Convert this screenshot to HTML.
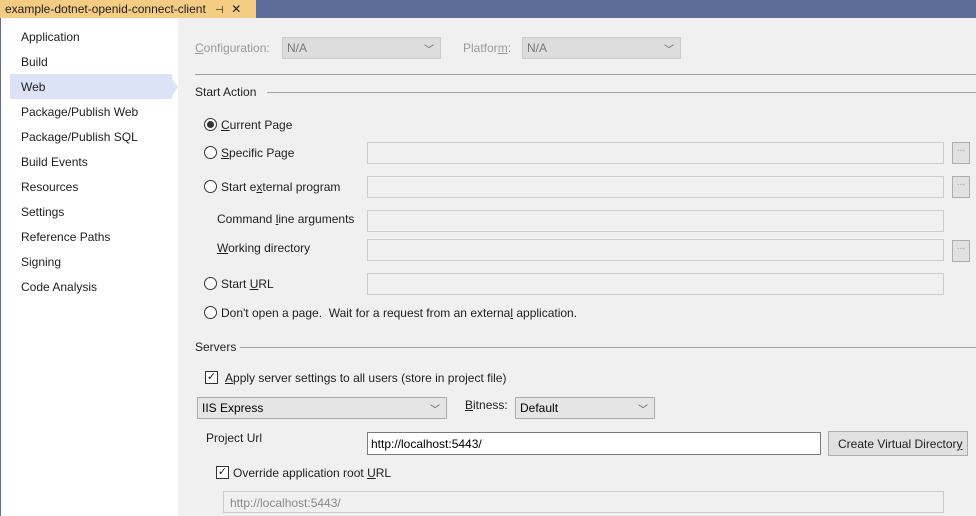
<!DOCTYPE html>
<html><head><style>
*{box-sizing:border-box}
body{margin:0;width:976px;height:516px;overflow:hidden;font-family:"Liberation Sans",sans-serif;font-size:12px;color:#1e1e1e;position:relative;background:#f0f0f0}
.a{position:absolute;white-space:nowrap}
.tb{left:0;top:0;width:976px;height:18px;background:#5d6b99}
.tab{left:0;top:0;width:256px;height:18px;background:#f5cc84;padding:2px 0 0 5px;font-size:12px}
.side{left:0;top:18px;width:178px;height:498px;background:#fff;border-left:1px solid #5d6b99}
.si{left:21px}
.sel{left:10px;top:74px;width:162px;height:25px;background:#dde3f7}
.box{background:#f0f0f0;border:1px solid #ccc;height:22px}
.dd{background:#ddd;border:1px solid #ccc;height:22px;padding:3px 4px;color:#777}
.dd2{background:#e5e5e5;border:1px solid #adadad;height:22px;padding:3px 4px;color:#000}
.rad{width:13px;height:13px;border:1px solid #333;border-radius:50%;background:#fff}
.cb{width:13px;height:13px;border:1px solid #333;background:#fff;font-size:11px;line-height:11px;text-align:center}
.hr{height:1px;background:#a0a0a0}
.btn{background:#e1e1e1;border:1px solid #adadad;width:18px;height:22px;color:#999;text-align:center;font-size:10px}
.chev{position:absolute;right:6px;top:3px;font-size:10px;color:#555}
u{text-decoration:underline}
</style></head><body>
<div class="a tb"></div>
<div class="a tab">example-dotnet-openid-connect-client <span style="margin-left:6px;font-size:10px">⊣</span> <span style="margin-left:4px">✕</span></div>
<div class="a side"></div>
<div class="a sel"></div>
<div class="a" style="left:172px;top:78px;width:0;height:0;border-top:9px solid transparent;border-bottom:9px solid transparent;border-left:6px solid #dde3f7"></div>
<div class="a si" style="top:30px">Application</div>
<div class="a si" style="top:55px">Build</div>
<div class="a si" style="top:80px">Web</div>
<div class="a si" style="top:105px">Package/Publish Web</div>
<div class="a si" style="top:130px">Package/Publish SQL</div>
<div class="a si" style="top:155px">Build Events</div>
<div class="a si" style="top:180px">Resources</div>
<div class="a si" style="top:205px">Settings</div>
<div class="a si" style="top:230px">Reference Paths</div>
<div class="a si" style="top:255px">Signing</div>
<div class="a si" style="top:280px">Code Analysis</div>

<div class="a" style="left:195px;top:41px;color:#999"><u>C</u>onfiguration:</div>
<div class="a dd" style="left:282px;top:37px;width:159px">N/A<span class="chev">﹀</span></div>
<div class="a" style="left:463px;top:41px;color:#999">Platfor<u>m</u>:</div>
<div class="a dd" style="left:522px;top:37px;width:159px">N/A<span class="chev">﹀</span></div>
<div class="a hr" style="left:195px;top:74px;width:781px"></div>
<div class="a" style="left:195px;top:85px">Start Action</div>
<div class="a hr" style="left:267px;top:92px;width:709px"></div>

<div class="a rad" style="left:204px;top:118px"><div style="margin:2px;width:7px;height:7px;border-radius:50%;background:#333"></div></div>
<div class="a" style="left:221px;top:118px"><u>C</u>urrent Page</div>
<div class="a rad" style="left:204px;top:146px"></div>
<div class="a" style="left:221px;top:146px"><u>S</u>pecific Page</div>
<div class="a box" style="left:367px;top:142px;width:577px"></div>
<div class="a btn" style="left:952px;top:142px">...</div>
<div class="a rad" style="left:204px;top:180px"></div>
<div class="a" style="left:221px;top:180px">Start e<u>x</u>ternal program</div>
<div class="a box" style="left:367px;top:176px;width:577px"></div>
<div class="a btn" style="left:952px;top:176px">...</div>
<div class="a" style="left:217px;top:212px">Command <u>l</u>ine arguments</div>
<div class="a box" style="left:367px;top:210px;width:577px"></div>
<div class="a" style="left:217px;top:241px"><u>W</u>orking directory</div>
<div class="a box" style="left:367px;top:239px;width:577px"></div>
<div class="a btn" style="left:952px;top:240px">...</div>
<div class="a rad" style="left:204px;top:277px"></div>
<div class="a" style="left:221px;top:277px">Start <u>U</u>RL</div>
<div class="a box" style="left:367px;top:273px;width:577px"></div>
<div class="a rad" style="left:204px;top:306px"></div>
<div class="a" style="left:221px;top:306px">Don't open a page.&nbsp; Wait for a request from an externa<u>l</u> application.</div>

<div class="a" style="left:195px;top:340px">Servers</div>
<div class="a hr" style="left:240px;top:347px;width:736px"></div>
<div class="a cb" style="left:205px;top:371px">✓</div>
<div class="a" style="left:225px;top:371px"><u>A</u>pply server settings to all users (store in project file)</div>
<div class="a dd2" style="left:197px;top:397px;width:250px">IIS Express<span class="chev">﹀</span></div>
<div class="a" style="left:465px;top:398px"><u>B</u>itness:</div>
<div class="a dd2" style="left:515px;top:397px;width:140px">Default<span class="chev">﹀</span></div>
<div class="a" style="left:206px;top:431px">Pro<u>j</u>ect Url</div>
<div class="a" style="left:367px;top:432px;width:454px;height:23px;background:#fff;border:1px solid #7a7a7a;padding:4px 3px;color:#000">http://localhost:5443/</div>
<div class="a" style="left:828px;top:431px;width:140px;height:25px;background:#e1e1e1;border:1px solid #adadad;padding:5px 0 0 9px">Create Virtual Director<u>y</u></div>
<div class="a cb" style="left:216px;top:466px">✓</div>
<div class="a" style="left:233px;top:466px">Override application root <u>U</u>RL</div>
<div class="a box" style="left:223px;top:491px;width:721px;padding:4px 6px;color:#888">http://localhost:5443/</div>
</body></html>
